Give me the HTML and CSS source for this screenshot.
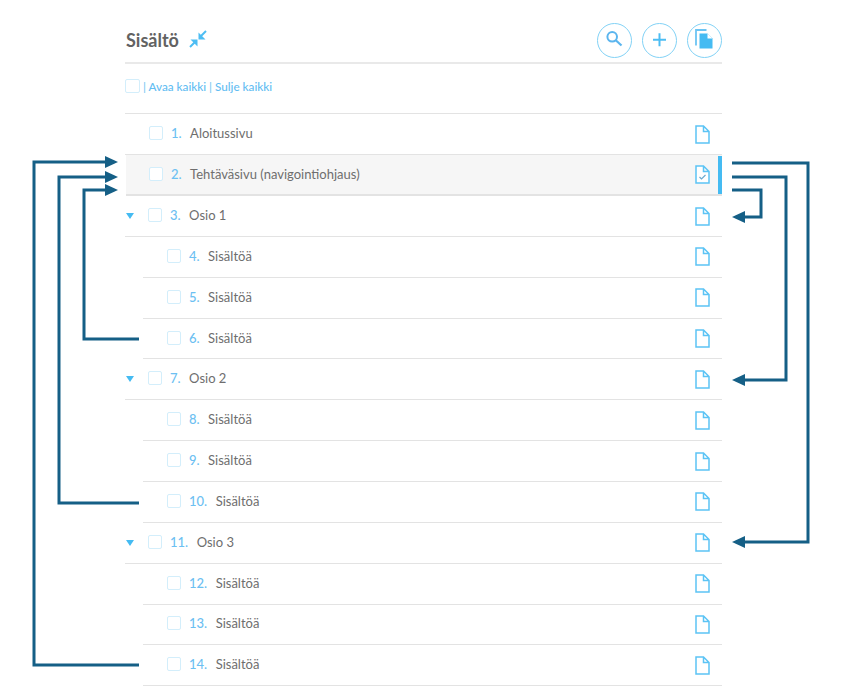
FILE: index.html
```html
<!DOCTYPE html>
<html lang="fi">
<head>
<meta charset="utf-8">
<title>Sisältö</title>
<link rel="stylesheet" href="styles.css">
</head>
<body>
<svg width="0" height="0" class="defs">
  <symbol id="page" viewBox="0 0 15 19"><path d="M1 1h7.500l5.500 5.500V18H1z M8.500 1v5.500H14" fill="#fff" stroke="#5cc4f5" stroke-width="1.500"/></symbol>
</svg>
<main class="panel">
  <header class="head">
    <h1 class="title">Sisältö</h1>
    <svg class="collapse" viewBox="0 0 18 18"><path d="M17 1l-5.500 5.500" fill="none" stroke="#4dbdf3" stroke-width="2"/><path d="M9.500 2.500v7h7z" fill="#4dbdf3"/><path d="M1 17l5.500-5.500" fill="none" stroke="#4dbdf3" stroke-width="2"/><path d="M1.500 9.500h7v7z" fill="#4dbdf3"/></svg>
    <div class="actions">
      <button class="round"><svg viewBox="0 0 32 32"><circle cx="14.200" cy="12.800" r="4.800" fill="none" stroke="#5bb5ee" stroke-width="2"/><path d="M17.800 16.300l5.700 5.200" stroke="#5bb5ee" stroke-width="2.200"/></svg></button>
      <button class="round"><svg viewBox="0 0 32 32"><path d="M16.500 9.300v13M10 15.800h13" stroke="#4dbdf3" stroke-width="2"/></svg></button>
      <button class="round"><svg viewBox="0 0 32 32"><path d="M8 21.500V6h10.500" fill="none" stroke="#6cc4f3" stroke-width="1.800"/><path d="M11.500 9.500h8l5 5v10h-13z" fill="#45bbf2"/><path d="M19.500 9.500v5h5z" fill="#fff"/></svg></button>
    </div>
  </header>
  <div class="tools">
    <span class="box"></span>
    <span class="links">| <a>Avaa kaikki</a> | <a>Sulje kaikki</a></span>
  </div>
  <ul class="tree">
    <li class="row top"><span class="box"></span><span class="num">1.</span><span class="name">Aloitussivu</span><svg class="doc"><use href="#page"/></svg></li>
    <li class="row top current"><span class="box"></span><span class="num">2.</span><span class="name">Tehtäväsivu (navigointiohjaus)</span><svg class="doc" viewBox="0 0 15 19"><path d="M1 1h7.500l5.500 5.500V18H1z M8.500 1v5.500H14" fill="#fff" stroke="#5cc4f5" stroke-width="1.500"/><path d="M4.500 12l2 2 4-4" fill="none" stroke="#6aa9cf" stroke-width="1.200"/></svg></li>
    <li class="row section"><i class="caret"></i><span class="box"></span><span class="num">3.</span><span class="name">Osio 1</span><svg class="doc"><use href="#page"/></svg></li>
    <li class="row child"><span class="box"></span><span class="num">4.</span><span class="name">Sisältöä</span><svg class="doc"><use href="#page"/></svg></li>
    <li class="row child"><span class="box"></span><span class="num">5.</span><span class="name">Sisältöä</span><svg class="doc"><use href="#page"/></svg></li>
    <li class="row child"><span class="box"></span><span class="num">6.</span><span class="name">Sisältöä</span><svg class="doc"><use href="#page"/></svg></li>
    <li class="row section"><i class="caret"></i><span class="box"></span><span class="num">7.</span><span class="name">Osio 2</span><svg class="doc"><use href="#page"/></svg></li>
    <li class="row child"><span class="box"></span><span class="num">8.</span><span class="name">Sisältöä</span><svg class="doc"><use href="#page"/></svg></li>
    <li class="row child"><span class="box"></span><span class="num">9.</span><span class="name">Sisältöä</span><svg class="doc"><use href="#page"/></svg></li>
    <li class="row child"><span class="box"></span><span class="num">10.</span><span class="name">Sisältöä</span><svg class="doc"><use href="#page"/></svg></li>
    <li class="row section"><i class="caret"></i><span class="box"></span><span class="num">11.</span><span class="name">Osio 3</span><svg class="doc"><use href="#page"/></svg></li>
    <li class="row child"><span class="box"></span><span class="num">12.</span><span class="name">Sisältöä</span><svg class="doc"><use href="#page"/></svg></li>
    <li class="row child"><span class="box"></span><span class="num">13.</span><span class="name">Sisältöä</span><svg class="doc"><use href="#page"/></svg></li>
    <li class="row child"><span class="box"></span><span class="num">14.</span><span class="name">Sisältöä</span><svg class="doc"><use href="#page"/></svg></li>
  </ul>
</main>
<svg class="arrows" viewBox="0 0 843 699">
  <g fill="none" stroke="#155f86" stroke-width="3">
    <path d="M139 665H34V162H106"/>
    <path d="M139 503H59V177H106"/>
    <path d="M139 339H84V190H106"/>
    <path d="M732 163H808V542H744"/>
    <path d="M732 177H786V380H744"/>
    <path d="M732 190H761V217H744"/>
  </g>
  <g fill="#155f86">
    <path d="M118 162l-13-6v12z"/>
    <path d="M118 177l-13-6v12z"/>
    <path d="M118 190l-13-6v12z"/>
    <path d="M732 217l13-6v12z"/>
    <path d="M732 380l13-6v12z"/>
    <path d="M732 542l13-6v12z"/>
  </g>
</svg>
</body>
</html>
```
FILE: styles.css
```css
html, body { margin: 0; background: #fff; }
body { position: relative; width: 843px; height: 699px; overflow: hidden; font-family: Lato, "Open Sans", sans-serif; color: #6b6b6b; }
.defs { position: absolute; }
.panel { width: 597px; margin-left: 125px; }
.head { display: flex; align-items: center; box-sizing: border-box; height: 64px; padding-top: 19px; border-bottom: 2px solid #e9e9e9; }
.title { margin: 0 0 2px 1px; font-size: 18px; font-weight: 700; color: #626262; }
.collapse { width: 18px; height: 18px; margin: 0 0 3px 10px; }
.actions { display: flex; gap: 10px; margin-left: auto; margin-bottom: 1px; }
.round { box-sizing: border-box; width: 35px; height: 35px; padding: 0; border: 1.5px solid #82d2f6; border-radius: 50%; background: #fff; overflow: hidden; }
.round svg { display: block; width: 32px; height: 32px; }
.tools { display: flex; align-items: center; gap: 3px; box-sizing: border-box; height: 50.4px; padding-bottom: 5px; border-bottom: 1px solid #e3e3e3; font-size: 11.7px; font-weight: 500; color: #7cc9f2; }
.links a { color: #63bdf2; }
.box { display: block; flex: none; box-sizing: border-box; width: 14px; height: 14px; border: 1.5px solid #d3eefb; border-radius: 2px; background: #fff; }
.tools .box { width: 15px; height: 14px; }
.tree { margin: 0; padding: 0; list-style: none; }
.row { position: relative; display: flex; align-items: center; box-sizing: border-box; height: 40.857px; padding-bottom: 2px; border-bottom: 1px solid #e3e3e3; font-size: 13px; }
.top { padding-left: 24px; }
.section { padding-left: 23px; }
.child { margin-left: 18px; padding-left: 24px; }
.num { margin: 0 8.5px 0 8px; font-weight: 500; color: #6cc0f2; }
.name { color: #6e6e6e; }
.doc { width: 15px; height: 19px; margin: 2px 12px 0 auto; }
.current { margin-left: 1px; padding-left: 23px; background: #f6f6f6; border-bottom-width: 2px; }
.current::after { content: ""; position: absolute; right: 0; top: 1px; bottom: 0; width: 4px; background: #45bbf2; }
.caret { position: absolute; left: 1px; top: 17px; width: 0; height: 0; border: 4.5px solid transparent; border-top: 6px solid #45bbf2; border-bottom: 0; }
.arrows { position: absolute; left: 0; top: 0; width: 843px; height: 699px; pointer-events: none; }
```
